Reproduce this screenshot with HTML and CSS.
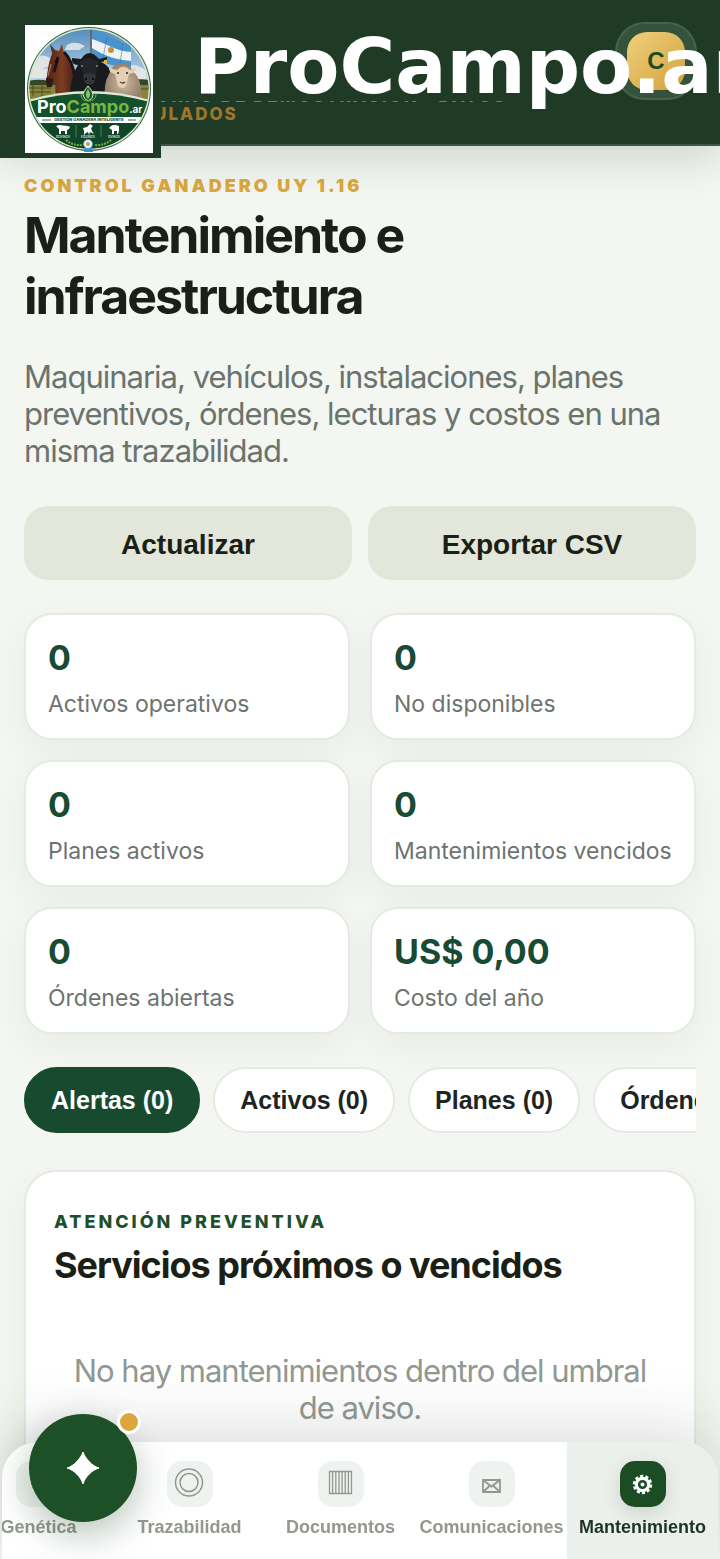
FILE: index.html
```html
<!DOCTYPE html>
<html lang="es">
<head>
<meta charset="utf-8">
<meta name="viewport" content="width=device-width, initial-scale=1">
<title>ProCampo.ar</title>
<link rel="stylesheet" href="styles.css">
</head>
<body>
<header class="topbar">
  <p class="topbar-note">ENTORNO DE DEMOSTRACIÓN · DATOS<br>SIMULADOS</p>
  <div class="brand-band"></div>
  <button class="account" type="button" aria-label="Cuenta"><span class="account-initial">C</span></button>
  <div class="brand-logo">
    <svg viewBox="0 0 128 128" role="img" aria-label="ProCampo.ar">
      <defs>
        <clipPath id="disc"><circle cx="64" cy="64" r="59.500"/></clipPath>
        <linearGradient id="sky" x1="0" y1="0" x2="0" y2="1"><stop offset="0" stop-color="#4d86b8"/><stop offset=".65" stop-color="#b7d2e4"/><stop offset="1" stop-color="#f1dfb8"/></linearGradient>
        <linearGradient id="bay" x1="0" y1="0" x2="1" y2="0"><stop offset="0" stop-color="#4a2114"/><stop offset=".5" stop-color="#7d3d22"/><stop offset="1" stop-color="#3a1a11"/></linearGradient>
        <radialGradient id="wool"><stop offset="0" stop-color="#cdbb9f"/><stop offset="1" stop-color="#93806a"/></radialGradient>
      </defs>
      <rect width="128" height="128" fill="#fff"/>
      <circle cx="64" cy="64" r="62" fill="#2d6a37"/>
      <circle cx="64" cy="64" r="61" fill="#dcead5"/>
      <g clip-path="url(#disc)">
        <rect width="128" height="80" fill="url(#sky)"/>
        <path d="M8 35q8-7 15-3 6 2 4 8l-22 8zM42 20q8-5 18 1l-6 4H40zM4 48q12-7 20-3v8H4zM101 42q10-5 20 4v8h-18z" fill="#f0eee5" opacity=".8"/>
        <path d="M0 57q12-4 24-1l84-1q10-2 20 1v8H0z" fill="#34472a"/>
        <path d="M0 60h128v22H0z" fill="#85843a"/>
        <path d="M1 63h25M1 67h25M8 60v11M17 60v11M108 64h18M112 61v10" stroke="#4c4924" fill="none"/>
        <path d="M66 4v36" stroke="#6b5d4c" stroke-width="1.500"/>
        <path d="M67 5c13 2 26 13 39 14v24c-13-2-25-2-39-12z" fill="#4b93cc"/>
        <path d="M67 14c13 4 26 13 39 13v9c-13-1-25-4-39-13z" fill="#eef3f5"/>
        <circle cx="86" cy="25" r="3" fill="#c5913c"/>
        <path d="M82 12l-4 21M98 18l-3 21" stroke="#276da4" opacity=".5" fill="none"/>
        <path d="M27 28l-2-9 5 6 4 1 3-7 2 9c7 6 10 17 12 29l2 22H31l-1-23-3 6h-5l-1-6c2-9 2-18 6-27z" fill="url(#bay)"/>
        <path d="M39 27q8 8 11 25M33 32l-4 15" stroke="#211310" stroke-width="3" fill="none"/>
        <path d="M30 36l3 1M24 57l4-1" stroke="#110b09" stroke-width="2"/>
        <path d="M26 39l-3 12" stroke="#c4815a"/>
        <path d="M21 53l7 1-2 8h-4z" fill="#2d1a16"/>
        <path d="M47 33l9 1q8-12 18 0l8-2q1 4-6 5 12 5 11 20l-2 22H45q-1-25 8-39-7 0-6-7z" fill="#191a1d"/>
        <path d="M54 37q9-8 20 0l-4 18q-5 7-10 0z" fill="#24252a"/>
        <path d="M58 50q7-4 13 0l-2 8q-4 3-9 0z" fill="#34353a"/>
        <circle cx="57" cy="41" r="1" fill="#8c8173"/><circle cx="72" cy="41" r="1" fill="#8c8173"/>
        <circle cx="61" cy="54" r="1"/><circle cx="68" cy="54" r="1"/>
        <rect x="79" y="35" width="3" height="4" fill="#e5b43d"/>
        <path d="M84 49q4-11 13-11 8 0 11 9 9 5 9 31H80q-2-19 4-29z" fill="url(#wool)"/>
        <path d="M84 43l8 2q6-7 13 0l6-2q0 5-7 6l-3 12q-4 4-8 0l-3-12q-6-1-6-6z" fill="#e3cfb3"/>
        <circle cx="93" cy="48" r="1" fill="#2f251d"/><circle cx="102" cy="48" r="1" fill="#2f251d"/>
        <path d="M95 57q3 2 5 0" stroke="#5f463a" stroke-width="1.500" fill="none"/>
        <path d="M0 76Q64 56 128 76v60H0z" fill="#dfead6"/>
        <path d="M0 78Q64 59 128 78v58H0z" fill="#14502b"/>
        <path d="M0 92h128v6H0z" fill="#fff"/>
        <path d="M0 98h128v30H0z" fill="#10452a"/>
      </g>
      <path d="M63 61q-5 6-5 9 1 4 5 6 5-2 5-6 0-4-5-9z" fill="#175b2d" stroke="#dcebd2"/>
      <path d="M63 64q-4 6 0 10 4-4 0-10z" fill="#8dc56b"/>
      <path d="M56 69q0 7 7 7 8 0 8-7" stroke="#6ba64c" fill="none"/>
      <text class="logo-name" x="12" y="88" fill="#fff">Pro<tspan fill="#76b843">Campo</tspan><tspan class="logo-suffix">.ar</tspan></text>
      <path d="M17 95h9M103 95h8" stroke="#3a6b47"/>
      <text class="logo-tag" x="64" y="96" fill="#1d4c2c">GESTIÓN GANADERA INTELIGENTE</text>
      <path d="M51 100v12M76 100v12" stroke="#4b8150"/>
      <path d="M31 101l3-1 9 1 2 1-1 2-2 1v4h-2v-3h-4v3h-2v-5zM58 103l4-1 3-3 3 2-2 2 1 3 2 3-2-1-2-1-1 3-1-3-2 1-2 2v-4zM84 103l2-2q3-2 8 0v5l-1 3h-1v-3h-3v3h-2v-4z" fill="#fff"/>
      <g class="logo-kind" fill="#c9d8c8"><text x="38" y="113">BOVINOS</text><text x="63" y="113">EQUINOS</text><text x="89" y="113">OVINOS</text></g>
      <path d="M41 115q7 6 17 5M86 115q-7 6-17 5" stroke="#7da341" stroke-width="2" stroke-dasharray="2 1" fill="none"/>
      <path d="M60 121l-1 6h9l-1-6z" fill="#3c91c6"/>
      <circle cx="63" cy="119" r="4.500" fill="#edf4f7" stroke="#4ca1d0"/><circle cx="63" cy="119" r="2" fill="#d09b3a"/>
    </svg>
  </div>
  <strong class="brand-name">ProCampo.ar</strong>
</header>

<main class="page">
  <section class="intro">
    <p class="eyebrow eyebrow-gold">CONTROL GANADERO UY 1.16</p>
    <h1 class="title">Mantenimiento e infraestructura</h1>
    <p class="lead">Maquinaria, vehículos, instalaciones, planes preventivos, órdenes, lecturas y costos en una misma trazabilidad.</p>
  </section>
  <div class="actions">
    <button class="action" type="button">Actualizar</button>
    <button class="action" type="button">Exportar CSV</button>
  </div>
  <section class="stats">
    <article class="stat"><strong class="stat-value">0</strong><span class="stat-label">Activos operativos</span></article>
    <article class="stat"><strong class="stat-value">0</strong><span class="stat-label">No disponibles</span></article>
    <article class="stat"><strong class="stat-value">0</strong><span class="stat-label">Planes activos</span></article>
    <article class="stat"><strong class="stat-value">0</strong><span class="stat-label">Mantenimientos vencidos</span></article>
    <article class="stat"><strong class="stat-value">0</strong><span class="stat-label">Órdenes abiertas</span></article>
    <article class="stat"><strong class="stat-value">US$ 0,00</strong><span class="stat-label">Costo del año</span></article>
  </section>
  <div class="tabs">
    <button class="tab tab-active" type="button">Alertas (0)</button>
    <button class="tab" type="button">Activos (0)</button>
    <button class="tab" type="button">Planes (0)</button>
    <button class="tab" type="button">Órdenes (0)</button>
  </div>
  <section class="panel">
    <p class="eyebrow">ATENCIÓN PREVENTIVA</p>
    <h2 class="panel-title">Servicios próximos o vencidos</h2>
    <p class="empty">No hay mantenimientos dentro del umbral de aviso.</p>
  </section>
</main>

<nav class="dock" aria-label="Secciones">
  <a class="dock-item" href="#genetica"><span class="dock-icon"><svg viewBox="0 0 46 46"><circle cx="23" cy="23" r="7" fill="none" stroke="currentColor" stroke-width="2" stroke-dasharray="1 2"/></svg></span>Genética</a>
  <a class="dock-item" href="#trazabilidad"><span class="dock-icon"><svg viewBox="0 0 46 46"><g fill="none" stroke="currentColor" stroke-width="1.500"><circle cx="22" cy="21.500" r="13.500"/><circle cx="22" cy="21.500" r="9"/></g></svg></span>Trazabilidad</a>
  <a class="dock-item" href="#documentos"><span class="dock-icon"><svg viewBox="0 0 46 46"><path d="M11.500 10.500h22v22h-22zM14.600 11v21M17.800 11v21M21 11v21M24.100 11v21M27.200 11v21M30.400 11v21" fill="none" stroke="currentColor" stroke-width="1.300"/></svg></span>Documentos</a>
  <a class="dock-item" href="#comunicaciones"><span class="dock-icon"><svg viewBox="0 0 46 46"><path d="M14 19h17v12H14zM14 19l8.500 6.500 8.500-6.500M14 31l6.500-6M31 31l-6.500-6" fill="none" stroke="currentColor" stroke-width="1.800"/></svg></span>Comunicaciones</a>
  <a class="dock-item dock-item-active" href="#mantenimiento" aria-current="page"><span class="dock-icon"><svg viewBox="0 0 46 46"><g fill="none" stroke="currentColor"><circle cx="22.500" cy="23.500" r="6.200" stroke-width="3.200"/><circle cx="22.500" cy="23.500" r="8.500" stroke-width="2.400" stroke-dasharray="3.140 2.200"/></g><circle cx="22.500" cy="23.500" r="2" fill="currentColor"/></svg></span>Mantenimiento</a>
</nav>
<button class="assistant" type="button" aria-label="Asistente">
  <svg class="assistant-star" viewBox="0 0 36 36"><path d="M18 2c2 6 9 14 16 16-7 2-14 9-16 16-2-7-9-14-16-16 7-2 14-10 16-16z" fill="#fff" stroke="#fff"/></svg>
  <span class="assistant-dot"></span>
</button>
</body>
</html>
```
FILE: styles.css
```css
* { box-sizing: border-box; }
body {
  margin: 0;
  min-height: 100vh;
  display: flex;
  flex-direction: column;
  overflow-x: hidden;
  background: #f3f6f1;
  color: #1a2015;
  font-family: Inter, "Liberation Sans", sans-serif;
}
h1, h2, p { margin: 0; }
button { border: 0; padding: 0; font-family: "Liberation Sans", Arial, sans-serif; font-weight: 700; }
a { color: inherit; text-decoration: none; }

.topbar {
  position: relative;
  padding: 87px 24px 21px 116px;
  min-height: 146px;
  background: #1f3b25;
  border-bottom: 2px solid #3d5742;
  box-shadow: 0 8px 44px rgba(30, 50, 35, .2);
}
.topbar-note {
  color: #a1752a;
  font-size: 17px;
  line-height: 18px;
  font-weight: 800;
  letter-spacing: 2px;
  white-space: nowrap;
}
.brand-band { position: absolute; inset: 0 0 auto 0; height: 101px; background: #1f3b25; }
.brand-logo { position: absolute; top: 0; left: 0; padding: 25px 8px 5px 25px; background: #1f3b25; }
.brand-logo svg { display: block; width: 128px; height: 128px; }
.logo-name { font: 700 18px Inter, sans-serif; }
.logo-suffix { font-size: 10px; fill: #fff; }
.logo-tag { font: 800 4px Inter, sans-serif; text-anchor: middle; }
.logo-kind { font: 700 3px Inter, sans-serif; text-anchor: middle; }
.brand-name {
  position: absolute;
  top: 23px;
  left: 194px;
  right: 0;
  overflow: hidden;
  color: #fff;
  font: 700 76px/88px "DejaVu Sans", sans-serif;
  white-space: nowrap;
}
.account {
  position: absolute;
  top: 22px;
  right: 23px;
  padding: 8px 10px;
  border: 2px solid #48634d;
  border-radius: 30px;
  background: #35523b;
}
.account-initial {
  display: grid;
  place-items: center;
  width: 58px;
  height: 58px;
  border-radius: 20px;
  background: linear-gradient(135deg, #eed07d, #d5a13c);
  color: #1d4a24;
  font-size: 24px;
}

.page { flex: 1; display: flex; flex-direction: column; padding: 28px 24px 0; }
.eyebrow { color: #1e4f2a; font-size: 18px; line-height: 24px; font-weight: 800; letter-spacing: 3px; }
.eyebrow-gold { color: #dba740; font-weight: 900; }
.title { margin-top: 7px; font-size: 50px; line-height: 61px; font-weight: 700; letter-spacing: -2px; }
.lead { margin-top: 31px; color: #6b736d; font-size: 31px; line-height: 37px; letter-spacing: -1px; }

.actions { display: grid; grid-template-columns: 1fr 1fr; gap: 16px; margin-top: 37px; }
.action { height: 74px; padding-top: 4px; border-radius: 24px; background: #e2e6db; color: #1a2015; font-size: 28px; }

.stats { display: grid; grid-template-columns: repeat(2, minmax(0, 1fr)); gap: 20px; margin-top: 33px; }
.stat {
  display: flex;
  flex-direction: column;
  gap: 8px;
  padding: 21px 22px 18px;
  border: 2px solid #e5eae5;
  border-radius: 28px;
  background: #fff;
  box-shadow: 0 12px 36px rgba(30, 60, 40, .05);
}
.stat-value { color: #184a34; font-size: 34px; line-height: 44px; }
.stat-label { color: #6d746f; font-size: 23px; line-height: 32px; white-space: nowrap; }

.tabs { display: flex; gap: 13px; margin-top: 33px; overflow: hidden; }
.tab {
  flex: none;
  height: 66px;
  padding: 0 25px;
  border: 2px solid #e5eae5;
  border-radius: 33px;
  background: #fff;
  color: #1e241f;
  font-size: 25px;
}
.tab-active { border-color: #184a30; background: #184a30; color: #fff; }

.panel {
  flex: 1;
  margin-top: 37px;
  padding: 38px 28px 0;
  border: 2px solid #e5eae5;
  border-bottom: 0;
  border-radius: 32px 32px 0 0;
  background: #fff;
  box-shadow: 0 12px 36px rgba(30, 60, 40, .05);
}
.panel-title { margin-top: 8px; font-size: 36px; line-height: 46px; letter-spacing: -1px; }
.empty { margin-top: 64px; color: #929892; font-size: 31px; line-height: 37px; letter-spacing: -1px; text-align: center; }

.dock {
  position: fixed;
  left: 2px;
  right: 2px;
  bottom: 0;
  display: flex;
  justify-content: flex-end;
  overflow: hidden;
  border-radius: 36px 36px 0 0;
  background: #fff;
  box-shadow: 0 -12px 64px rgba(30, 50, 35, .16);
}
.dock-item {
  flex: none;
  display: flex;
  flex-direction: column;
  align-items: center;
  gap: 10px;
  width: 151px;
  padding: 19px 0 21px;
  color: #92978f;
  font: 700 18px/21px "Liberation Sans", Arial, sans-serif;
}
.dock-icon { width: 46px; height: 46px; border-radius: 15px; background: #eff3ef; }
.dock-icon svg { display: block; }
.dock-item-active { background: #ecf0ec; color: #1c3425; }
.dock-item-active .dock-icon { background: #1b4c24; color: #fff; box-shadow: 0 6px 18px rgba(30, 60, 40, .16); }

.assistant {
  position: fixed;
  left: 29px;
  bottom: 37px;
  display: grid;
  place-items: center;
  width: 108px;
  height: 108px;
  border-radius: 50%;
  background: #1e5027;
  box-shadow: 0 12px 36px rgba(30, 70, 40, .32);
}
.assistant-star { width: 36px; height: 36px; }
.assistant-dot {
  position: absolute;
  top: -4px;
  right: -4px;
  width: 24px;
  height: 24px;
  border: 3px solid #fff;
  border-radius: 50%;
  background: #dda63d;
}
```
